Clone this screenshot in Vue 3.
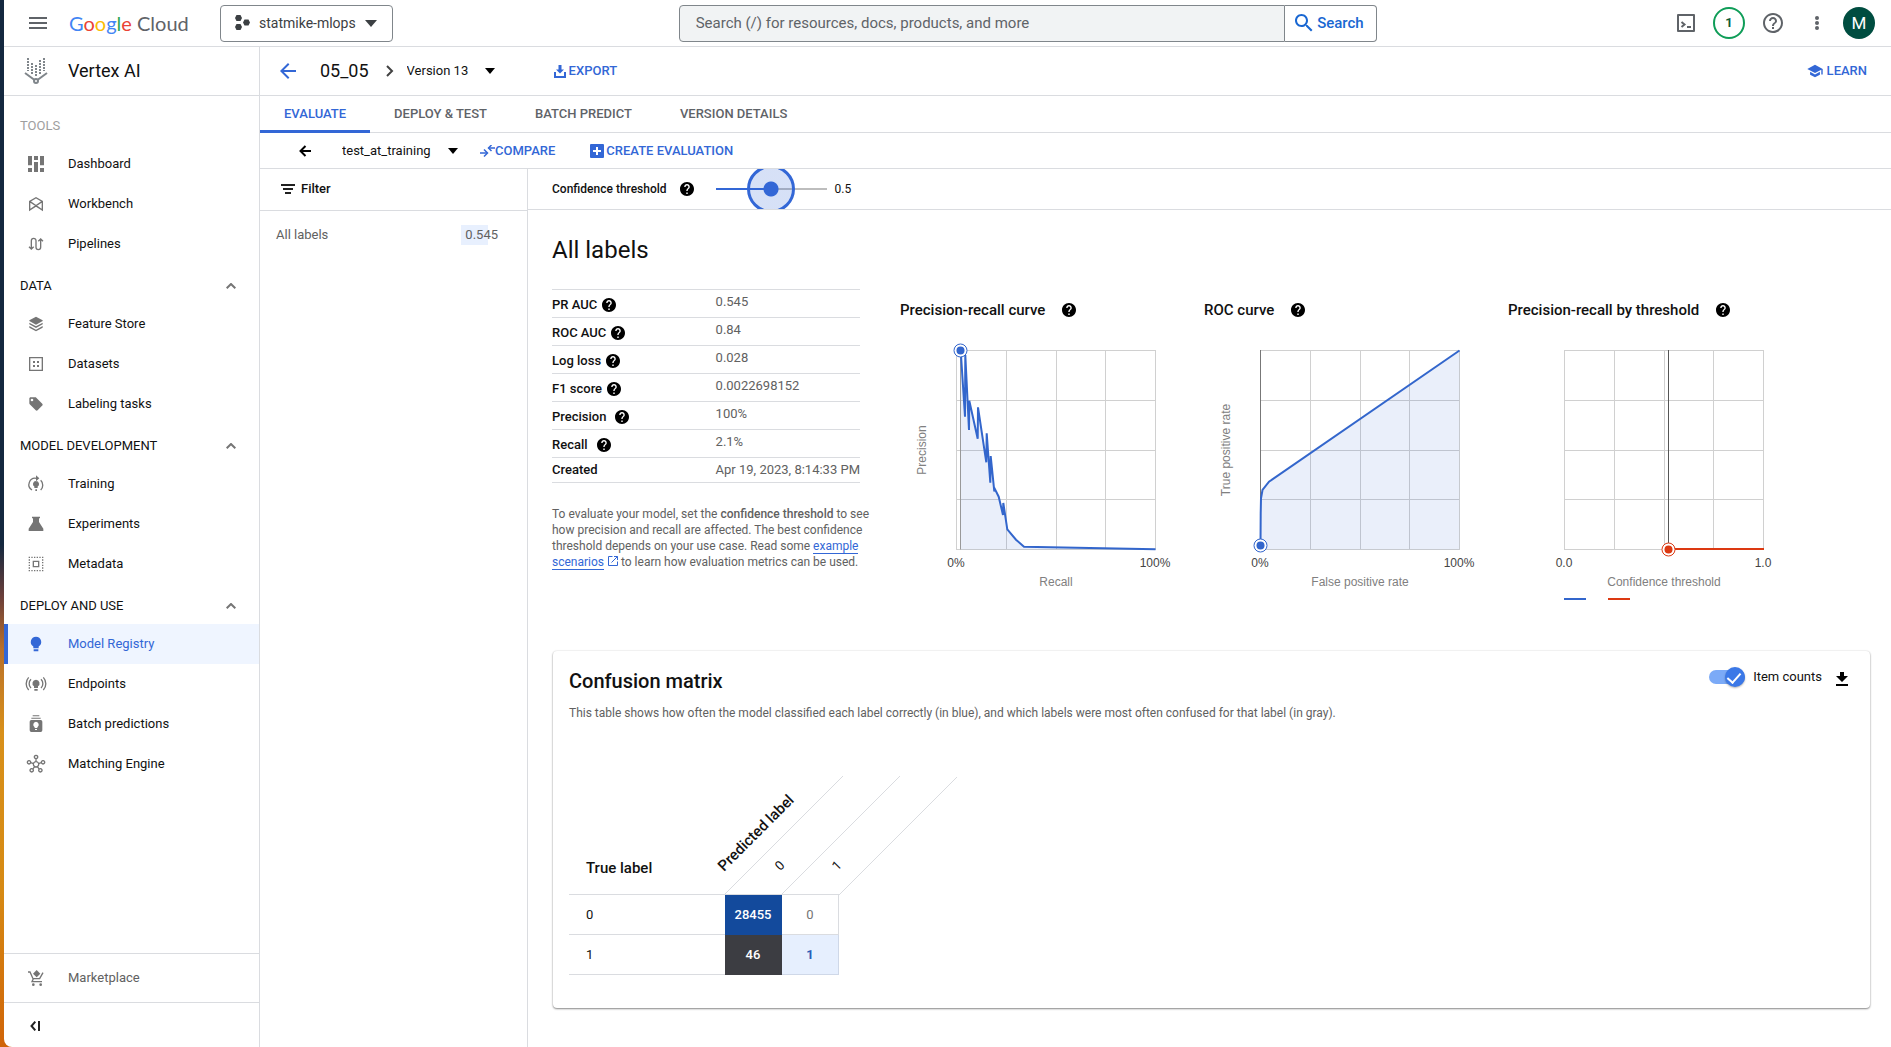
<script setup>
import { ref } from 'vue'

const search = ref('')
const version = ref('Version 13')
const evaluation = ref('test_at_training')
const threshold = ref(0.5)
const itemCounts = ref(true)

const HELP = 'M12 2C6.48 2 2 6.48 2 12s4.48 10 10 10 10-4.48 10-10S17.52 2 12 2zm1 17h-2v-2h2v2zm2.07-7.75l-.9.92C13.45 12.9 13 13.5 13 15h-2v-.5c0-1.1.45-2.1 1.17-2.83l1.24-1.26c.37-.36.59-.86.59-1.41 0-1.1-.9-2-2-2s-2 .9-2 2H8c0-2.21 1.79-4 4-4s4 1.79 4 4c0 .88-.36 1.68-.93 2.25z'

const groups = [
  {
    title: 'TOOLS',
    muted: true,
    items: [
      { name: 'Dashboard', fill: 'M0 0h6v14H0zM0 18h6v6H0zM9 0h6v6H9zM9 9h6v15H9zM18 0h6v14h-6zM18 18h6v6h-6z' },
      { name: 'Workbench', line: 'M2.500 21V8L12 2.500 21.500 8v13L12 15zM2.500 8l19 13M21.500 8l-19 13' },
      { name: 'Pipelines', line: 'M5 19V7a3.500 3.500 0 0 1 7 0V17a3.500 3.500 0 0 0 7 0V5M1.500 16L5 19.500 8.500 16M15.500 8L19 4.500 22.500 8' },
    ],
  },
  {
    title: 'DATA',
    items: [
      { name: 'Feature Store', fill: 'M12 1l10 5.500v1L12 13 2 7.500v-1zM2 10l10 5.500L22 10v2.500L12 18 2 12.500zM2 15l10 5.500L22 15v2.500L12 23 2 17.500z' },
      { name: 'Datasets', line: 'M2.500 2.500h19v19h-19z', fill: 'M7.500 7.500h3v3h-3zM13.500 7.500h3v3h-3zM7.500 13.500h3v3h-3zM13.500 13.500h3v3h-3z' },
      { name: 'Labeling tasks', fill: 'M21.410 11.580l-9-9C12.050 2.220 11.550 2 11 2H4c-1.100 0-2 .9-2 2v7c0 .55.22 1.050.59 1.420l9 9c.36.36.86.58 1.410.58.55 0 1.050-.22 1.410-.59l7-7c.37-.36.59-.86.59-1.410 0-.55-.23-1.060-.59-1.420zM6 8a2 2 0 1 1 0-4 2 2 0 0 1 0 4z' },
    ],
  },
  {
    title: 'MODEL DEVELOPMENT',
    items: [
      { name: 'Training', fill: 'M12 7.500a4.500 4.500 0 0 0-2.500 8.300V18h5v-2.200A4.500 4.500 0 0 0 12 7.500zM11 20h2.500v2.500H11zM12-1l5 4.500L12 8z', line: 'M6 21A9.500 9.500 0 0 1 12.500 3.500M19 6.500a10 10 0 0 1 0 14.500' },
      { name: 'Experiments', fill: 'M6 1h12v2.500h-1.500V9L23 19v3.500H1V19L7.500 9V3.500H6z' },
      { name: 'Metadata', line: 'M8 8h8v8H8z', dash: 'M1 2h22M1 22h22M2 1v22M22 1v22' },
    ],
  },
  {
    title: 'DEPLOY AND USE',
    items: [
      { name: 'Model Registry', active: true, fill: 'M12 1a8 8 0 0 0-4 14.800V18.500h8v-2.700A8 8 0 0 0 12 1zM8.500 20h7v3h-7z' },
      { name: 'Endpoints', fill: 'M12 5.500a5.500 5.500 0 0 0-3 10V18h6v-2.500a5.500 5.500 0 0 0-3-10zM9.500 19.500h5V22h-5z', line: 'M4.500 5a9 9 0 0 0 0 13M19.500 5a9 9 0 0 1 0 13M1 2a14 14 0 0 0 0 19M23 2a14 14 0 0 1 0 19' },
      { name: 'Batch predictions', fill: 'M7-1h10v1.500H7zM5 2.500h14V4H5zM5 6h14a2.500 2.500 0 0 1 2.500 2.500v13A2.500 2.500 0 0 1 19 24H5a2.500 2.500 0 0 1-2.500-2.500v-13A2.500 2.500 0 0 1 5 6zM12 8.500a4.500 4.500 0 0 0-2 8.300V18h4v-1.200a4.500 4.500 0 0 0-2-8.300zM10.500 19.500v1.500h3v-1.500z' },
      { name: 'Matching Engine', line: 'M12 8.500a4 4 0 1 0 .1 0zM12-1a2.500 2.500 0 1 0 .1 0zM1.500 7a2.500 2.500 0 1 0 .1 0zM22.500 7a2.500 2.500 0 1 0 .1 0zM5.500 19a2.500 2.500 0 1 0 .1 0zM18.500 19a2.500 2.500 0 1 0 .1 0zM12 4v4.500M4 10l4.400 1.500M20 10l-4.400 1.500M7.500 19.500l2.500-4M16.500 19.500L14 15.500' },
    ],
  },
]

const tabs = ['EVALUATE', 'DEPLOY & TEST', 'BATCH PREDICT', 'VERSION DETAILS']

const metrics = [
  { name: 'PR AUC', value: '0.545', help: true },
  { name: 'ROC AUC', value: '0.84', help: true },
  { name: 'Log loss', value: '0.028', help: true },
  { name: 'F1 score', value: '0.0022698152', help: true },
  { name: 'Precision', value: '100%', help: true, wide: true },
  { name: 'Recall', value: '2.1%', help: true, wide: true },
  { name: 'Created', value: 'Apr 19, 2023, 8:14:33 PM' },
]

const charts = [
  {
    title: 'Precision-recall curve', x: 'Recall', y: 'Precision', from: '0%', to: '100%',
    points: '60.7,20.5 65,86.7 65.3,25 69,100 69.3,70.7 77.7,108.7 78,77.3 86.3,132.3 86.7,103.3 90.3,152.7 90.7,126 94.3,161.3 95,159.3 98.7,166.7 103,185 103.3,173 107.3,199.3 116,209.7 124,216.7 255.5,219.3',
    base: '60.7', color: '#3366cc', cursor: 60.5, cursorColor: '#999', dot: [60.5, 20.5],
  },
  {
    title: 'ROC curve', x: 'False positive rate', y: 'True positive rate', from: '0%', to: '100%',
    points: '56.5,215.3 56.7,183.3 57,168.3 58.5,160 65,151.7 255.5,20.5',
    base: '56.5', color: '#3366cc', cursor: 56.5, cursorColor: '#777', dot: [56.5, 215.5],
  },
  {
    title: 'Precision-recall by threshold', x: 'Confidence threshold', y: '', from: '0.0', to: '1.0',
    points: '160.5,219 256,219', base: '', color: '#dc3912', cursor: 160.5, cursorColor: '#555', dot: [160.5, 219.5], legend: true,
  },
]

const matrix = [
  { label: '0', cells: [{ n: 28455, tone: 'deep' }, { n: 0, tone: 'plain' }] },
  { label: '1', cells: [{ n: 46, tone: 'dark' }, { n: 1, tone: 'pale' }] },
]
</script>

<template>
  <div class="desktop">
    <div class="window">
      <header class="topbar">
        <button class="icon-btn menu" aria-label="Main menu">
          <svg width="18" height="12" viewBox="0 0 18 12"><path d="M0 1h18M0 6h18M0 11h18" stroke="#5f6368" stroke-width="2" /></svg>
        </button>
        <a class="logo" href="#" aria-label="Google Cloud"><span class="b">G</span><span class="r">o</span><span class="y">o</span><span class="b">g</span><span class="g">l</span><span class="r">e</span> Cloud</a>
        <button class="project">
          <svg width="15" height="16" viewBox="0 0 15 16" fill="#3c4043"><path d="M1.500 0h4L7 3 5.500 6h-4L0 3zM1.500 9h4L7 12l-1.500 3h-4L0 12zM9.500 4.500h4l1.500 3-1.500 3h-4L8 7.500z" /></svg>
          <span>statmike-mlops</span>
          <svg width="12" height="7" viewBox="0 0 12 7"><path d="M0 0h12L6 7z" fill="#3c4043" /></svg>
        </button>
        <form class="search" @submit.prevent>
          <input v-model="search" type="text" aria-label="Search" placeholder="Search (/) for resources, docs, products, and more">
          <button type="submit">
            <svg width="18" height="18" viewBox="3 3 18 18"><path fill="#1967d2" d="M15.500 14h-.79l-.28-.27C15.410 12.590 16 11.110 16 9.500 16 5.910 13.090 3 9.500 3S3 5.910 3 9.500 5.910 16 9.500 16c1.610 0 3.090-.59 4.230-1.570l.27.28v.79l5 4.990L20.490 19l-4.990-5zm-6 0C7.010 14 5 11.990 5 9.500S7.010 5 9.500 5 14 7.010 14 9.500 11.990 14 9.500 14z" /></svg>
            Search
          </button>
        </form>
        <div class="tools">
          <button class="icon-btn" aria-label="Cloud Shell">
            <svg width="18" height="18" viewBox="0 0 18 18" fill="none" stroke="#5f6368" stroke-width="2"><path d="M1 1h16v16H1z" stroke-linejoin="round" /><path d="M4.500 8l3 2.500-3 2.500M10 13h4" /></svg>
          </button>
          <button class="count" aria-label="Notifications">1</button>
          <button class="icon-btn" aria-label="Help">
            <svg width="20" height="20" viewBox="2 2 20 20"><path fill="#5f6368" d="M11 18h2v-2h-2v2zm1-16C6.480 2 2 6.480 2 12s4.480 10 10 10 10-4.480 10-10S17.520 2 12 2zm0 18c-4.410 0-8-3.590-8-8s3.590-8 8-8 8 3.590 8 8-3.590 8-8 8zm0-14c-2.210 0-4 1.790-4 4h2c0-1.100.9-2 2-2s2 .9 2 2c0 2-3 1.750-3 5h2c0-2.250 3-2.500 3-5 0-2.210-1.790-4-4-4z" /></svg>
          </button>
          <button class="icon-btn more" aria-label="More options">
            <svg width="4" height="14" viewBox="0 0 4 14" fill="#5f6368"><circle cx="2" cy="2" r="2" /><circle cx="2" cy="7" r="2" /><circle cx="2" cy="12" r="2" /></svg>
          </button>
          <button class="avatar" aria-label="Account">M</button>
        </div>
      </header>

      <div class="body">
        <nav class="sidebar">
          <a class="product" href="#">
            <svg width="24" height="28" viewBox="0 0 24 28" fill="none" stroke="#80868b" stroke-width="2">
              <path d="M4 1v13M8 6v11M16 6v11M20 1v13" stroke-dasharray="2 1" />
              <path d="M12 8v12M16 3v2" stroke-dasharray="2 1" />
              <path d="M1 16l11 8 11-8" /><circle cx="12" cy="24" r="2" fill="#fff" />
            </svg>
            <span>Vertex AI</span>
          </a>
          <div class="groups">
            <section v-for="g in groups" :key="g.title">
              <h2 v-if="g.muted" class="muted">{{ g.title }}</h2>
              <button v-else class="group">
                {{ g.title }}
                <svg width="10" height="6" viewBox="0 0 10 6"><path d="M0.700 5.300L5 1l4.300 4.300" fill="none" stroke="#757575" stroke-width="2" /></svg>
              </button>
              <a v-for="i in g.items" :key="i.name" href="#" class="item" :class="{ active: i.active }">
                <svg width="16" height="16" viewBox="0 0 24 24">
                  <path v-if="i.line" :d="i.line" fill="none" stroke="currentColor" stroke-width="2" />
                  <path v-if="i.dash" :d="i.dash" fill="none" stroke="currentColor" stroke-width="2" stroke-dasharray="2 2" />
                  <path v-if="i.fill" :d="i.fill" fill="currentColor" fill-rule="evenodd" />
                </svg>
                <span>{{ i.name }}</span>
              </a>
            </section>
          </div>
          <a class="market" href="#">
            <svg width="16" height="16" viewBox="0 0 24 24">
              <path d="M0 3h3l4.500 10h10L22.500 4M8 13l-2 4.500h15" fill="none" stroke="#757575" stroke-width="2" />
              <path d="M13 0l5.500 5.500L13 11 7.500 5.500z" fill="#757575" /><circle cx="8" cy="22" r="2" fill="#757575" /><circle cx="19" cy="22" r="2" fill="#757575" />
            </svg>
            <span>Marketplace</span>
          </a>
          <button class="collapse" aria-label="Collapse menu">
            <svg width="10" height="10" viewBox="0 0 10 10"><path d="M5.300.7L1.500 5l3.800 4.300M9 0v10" fill="none" stroke="#212121" stroke-width="2" /></svg>
          </button>
        </nav>

        <main class="main">
          <div class="titlebar">
            <button class="icon-btn back" aria-label="Back">
              <svg width="16" height="16" viewBox="4 4 16 16"><path fill="#3367d6" d="M20 11H7.830l5.590-5.590L12 4l-8 8 8 8 1.410-1.410L7.830 13H20v-2z" /></svg>
            </button>
            <h1>05_05</h1>
            <svg class="crumb" width="8" height="12" viewBox="0 0 8 12"><path d="M1 1l5 5-5 5" fill="none" stroke="#424242" stroke-width="2" /></svg>
            <span class="dropdown ver">
              <select v-model="version" aria-label="Version"><option>Version 13</option></select>
              <svg width="10" height="6" viewBox="0 0 10 6"><path d="M0 0h10L5 6z" /></svg>
            </span>
            <button class="text-btn export">
              <svg width="12" height="13" viewBox="0 0 12 13" fill="#3367d6"><path d="M4.500 0h3v4.500H10L6 8.500 2 4.500h2.500zM0 7h2v4h8V7h2v6H0z" /></svg>EXPORT
            </button>
            <button class="text-btn learn">
              <svg width="16" height="14" viewBox="1 2 22 20"><path fill="#3367d6" d="M5 13.180v4L12 21l7-3.820v-4L12 17l-7-3.820zM12 3L1 9l11 6 9-4.910V17h2V9L12 3z" /></svg>LEARN
            </button>
          </div>

          <div class="tabs" role="tablist">
            <button v-for="(t, n) in tabs" :key="t" role="tab" :class="{ on: n === 0 }">{{ t }}</button>
          </div>

          <div class="toolbar">
            <button class="icon-btn" aria-label="Back to evaluations">
              <svg width="12" height="12" viewBox="0 0 12 12"><path d="M6.500 1l-5 5 5 5M1.500 6H12" fill="none" stroke="#000" stroke-width="2" /></svg>
            </button>
            <span class="dropdown eval">
              <select v-model="evaluation" aria-label="Evaluation"><option>test_at_training</option></select>
              <svg width="10" height="6" viewBox="0 0 10 6"><path d="M0 0h10L5 6z" /></svg>
            </span>
            <button class="text-btn compare">
              <svg width="15" height="12" viewBox="0 0 15 12"><path d="M0 8h7M15 3H8.500" stroke="#3367d6" stroke-width="1.500" /><path d="M4 4.500L7.500 8 4 11.500M11.500 0l-3 3 3 3" fill="none" stroke="#3367d6" stroke-width="1.500" /></svg>COMPARE
            </button>
            <button class="text-btn create">
              <svg width="14" height="14" viewBox="0 0 14 14"><rect width="14" height="14" rx="1" fill="#3367d6" /><path d="M7 3v8M3 7h8" stroke="#fff" stroke-width="2" /></svg>CREATE EVALUATION
            </button>
          </div>

          <div class="split">
            <aside class="labels">
              <button class="filter">
                <svg width="14" height="10" viewBox="0 0 14 10"><path d="M0 1h14M2 5h10M4 9h6" stroke="#212121" stroke-width="2" /></svg>Filter
              </button>
              <a class="label-row" href="#"><span>All labels</span><span class="score">0.545</span></a>
            </aside>

            <div class="content">
              <div class="threshold">
                <label for="threshold">Confidence threshold</label>
                <svg class="help" width="14" height="14" viewBox="2 2 20 20"><path :d="HELP" /></svg>
                <input id="threshold" v-model="threshold" type="range" min="0" max="1" step="0.01">
                <output for="threshold">{{ threshold }}</output>
              </div>

              <div class="report">
                <h2 class="heading">All labels</h2>
                <div class="overview">
                  <div class="summary">
                    <table class="metrics">
                      <tbody>
                        <tr v-for="m in metrics" :key="m.name">
                          <th scope="row"><span :class="{ wide: m.wide }">{{ m.name }}<svg v-if="m.help" width="14" height="14" viewBox="2 2 20 20"><path :d="HELP" /></svg></span></th>
                          <td>{{ m.value }}</td>
                        </tr>
                      </tbody>
                    </table>
                    <p class="hint">
                      To evaluate your model, set the <b>confidence threshold</b> to see how precision and recall are affected. The best confidence threshold depends on your use case. Read some <a href="#">example scenarios</a>
                      <svg width="10" height="10" viewBox="0 0 10 10"><path d="M4.500 .5h-4v9h9v-4M6 .5h3.500V4M9.500 .5L3.500 6.500" fill="none" stroke="#3367d6" /></svg>
                      to learn how evaluation metrics can be used.
                    </p>
                  </div>

                  <figure v-for="c in charts" :key="c.title" class="chart">
                    <figcaption>{{ c.title }}<svg width="14" height="14" viewBox="2 2 20 20"><path :d="HELP" /></svg></figcaption>
                    <svg width="304" height="274" viewBox="0 0 304 274">
                      <path d="M56 20.500h200M56 70.500h200M56 120.500h200M56 169.500h200M56 219.500h200M56.500 20v200M106.500 20v200M156.500 20v200M205.500 20v200M255.500 20v200" stroke="#d0d0d0" fill="none" />
                      <polygon v-if="c.base" :points="`${c.base},219.5 ${c.points} 255.5,219.5`" :fill="c.color" fill-opacity="0.1" />
                      <path :d="`M${c.cursor} 20V219.500`" :stroke="c.cursorColor" />
                      <polyline :points="c.points" fill="none" :stroke="c.color" stroke-width="2" />
                      <circle :cx="c.dot[0]" :cy="c.dot[1]" r="6.500" fill="#fff" :stroke="c.color" />
                      <circle :cx="c.dot[0]" :cy="c.dot[1]" r="4" :fill="c.color" />
                      <text class="tick" x="56" y="237">{{ c.from }}</text>
                      <text class="tick" x="255" y="237">{{ c.to }}</text>
                      <text class="axis" x="156" y="256">{{ c.x }}</text>
                      <text class="axis" transform="translate(26 120) rotate(-90)">{{ c.y }}</text>
                      <g v-if="c.legend" stroke-width="2"><path d="M56 269h22" stroke="#3366cc" /><path d="M100 269h22" stroke="#dc3912" /></g>
                    </svg>
                  </figure>
                </div>

                <section class="card">
                  <div class="card-head">
                    <h3>Confusion matrix</h3>
                    <label class="toggle"><input v-model="itemCounts" type="checkbox">Item counts</label>
                    <button class="icon-btn download" aria-label="Download">
                      <svg width="12" height="14" viewBox="0 0 12 14"><path d="M4 0h4v4h4l-6 6-6-6h4zM0 12h12v2H0z" /></svg>
                    </button>
                  </div>
                  <p>This table shows how often the model classified each label correctly (in blue), and which labels were most often confused for that label (in gray).</p>
                  <table class="matrix">
                    <thead>
                      <tr>
                        <th scope="col" class="corner">True label<span class="slant predicted">Predicted label</span></th>
                        <th v-for="r in matrix" :key="r.label" scope="col">
                          <svg class="rule" width="118" height="118" viewBox="0 0 118 118"><path d="M0 118L118 0" /></svg>
                          <span class="slant">{{ r.label }}</span>
                        </th>
                        <td class="edge"><svg class="rule" width="118" height="118" viewBox="0 0 118 118"><path d="M0 118L118 0" /></svg></td>
                      </tr>
                    </thead>
                    <tbody>
                      <tr v-for="r in matrix" :key="r.label">
                        <th scope="row">{{ r.label }}</th>
                        <td v-for="(c, n) in r.cells" :key="n" :class="c.tone">{{ c.n }}</td>
                      </tr>
                    </tbody>
                  </table>
                </section>
              </div>
            </div>
          </div>
        </main>
      </div>
    </div>
  </div>
</template>

<style>
body { margin: 0; }
</style>

<style scoped>
* { box-sizing: border-box; }
.desktop {
  display: flex;
  min-height: 100vh;
  padding-left: 4px;
  background: linear-gradient(#14283f 0%, #14283f 52%, #6b3f3a 57%, #b9702a 62%, #d8901a 70%, #d68a14 85%, #d06408 100%);
  font: 13px/20px Roboto, "Liberation Sans", sans-serif;
  color: #111;
}
.window {
  flex: 1;
  min-width: 0;
  display: flex;
  flex-direction: column;
  background: #fff;
  border-bottom-left-radius: 8px;
}
button, input, select { font: inherit; color: inherit; border: 0; padding: 0; margin: 0; background: none; }
button { cursor: pointer; }
a { text-decoration: none; color: inherit; }
h1, h2, h3, p, figure { margin: 0; }
svg { flex: none; display: block; }
.icon-btn { display: flex; align-items: center; justify-content: center; }

.topbar { display: flex; align-items: center; height: 47px; border-bottom: 1px solid #dadce0; padding: 0 16px 0 25px; }
.logo { margin-left: 22px; width: 151px; font: 20px/24px Lato, "Open Sans", sans-serif; color: #5f6368; white-space: nowrap; }
.logo .b { color: #4285f4; }
.logo .r { color: #ea4335; }
.logo .y { color: #fbbc04; }
.logo .g { color: #34a853; }
.project {
  display: flex; align-items: center; gap: 9px; height: 37px; padding: 0 15px 0 14px;
  border: 1px solid #80868b; border-radius: 4px; font-size: 14px; color: #3c4043; white-space: nowrap;
}
.search { display: flex; flex: 0 1 698px; height: 37px; margin: 0 auto 0 286px; }
.search input {
  flex: 1; min-width: 0; padding: 0 16px; font-size: 15px; background: #f1f3f4;
  border: 1px solid #80868b; border-radius: 4px 0 0 4px;
}
.search input::placeholder { color: #5f6368; opacity: 1; }
.search button {
  display: flex; align-items: center; gap: 4px; padding: 0 12px 0 10px; font-size: 15px; font-weight: 500; color: #1967d2;
  border: 1px solid #80868b; border-left: 0; border-radius: 0 4px 4px 0;
}
.tools { display: flex; align-items: center; gap: 18px; }
.count { width: 32px; height: 32px; border: 2px solid #0f9d58; border-radius: 50%; color: #0b5d36; font-weight: 700; }
.more { width: 24px; margin: 0 -4px 0 4px; }
.avatar { width: 32px; height: 32px; border-radius: 50%; background: #004d40; color: #fff; font-size: 17px; }

.body { flex: 1; display: flex; }
.sidebar { flex: none; width: 256px; display: flex; flex-direction: column; border-right: 1px solid #dadce0; }
.product { display: flex; align-items: center; gap: 20px; height: 49px; padding-left: 20px; border-bottom: 1px solid #dadce0; font-size: 18px; }
.groups { flex: 1; }
.muted { height: 48px; padding: 20px 16px 0; font-size: 13px; font-weight: 400; line-height: 20px; color: #9e9e9e; }
.group { display: flex; align-items: center; justify-content: space-between; width: 100%; height: 40px; padding: 4px 23px 0 16px; }
.item { display: flex; align-items: center; gap: 24px; height: 40px; padding-left: 24px; }
.item svg { color: #757575; overflow: visible; }
.item.active { padding-left: 20px; border-left: 4px solid #3367d6; background: #eff5ff; color: #3367d6; }
.item.active svg { color: #3367d6; }
.market { display: flex; align-items: center; gap: 24px; height: 49px; padding-left: 24px; border-top: 1px solid #dadce0; color: #616161; }
.collapse { height: 45px; padding: 2px 0 0 26px; border-top: 1px solid #dadce0; }

.main { flex: 1; min-width: 0; display: flex; flex-direction: column; }
.titlebar { display: flex; align-items: center; height: 49px; padding: 0 24px 0 20px; border-bottom: 1px solid #dadce0; }
h1 { margin-left: 24px; font-size: 18px; font-weight: 400; }
.crumb { margin: 0 13px 0 17px; }
.dropdown { position: relative; display: flex; align-items: center; }
.dropdown select { appearance: none; cursor: pointer; }
.dropdown svg { position: absolute; right: 0; pointer-events: none; }
.ver select { width: 88px; }
.eval select { width: 116px; }
.text-btn { display: flex; align-items: center; gap: 2px; font-weight: 500; color: #3367d6; white-space: nowrap; }
.export { margin-left: 59px; gap: 3px; }
.learn { margin-left: auto; gap: 4px; }
.tabs { display: flex; height: 37px; border-bottom: 1px solid #dadce0; }
.tabs button { height: 37px; padding: 2px 24px 0; border-bottom: 3px solid transparent; font-weight: 500; color: #5f6368; white-space: nowrap; }
.tabs .on { color: #3367d6; border-bottom-color: #3367d6; }
.toolbar { display: flex; align-items: center; height: 36px; padding-left: 39px; border-bottom: 1px solid #dadce0; }
.eval { margin-left: 31px; }
.compare { margin-left: 22px; gap: 0; }
.create { margin-left: 35px; }

.split { flex: 1; display: flex; }
.labels { flex: none; width: 268px; border-right: 1px solid #dadce0; }
.filter { display: flex; align-items: center; gap: 6px; width: 100%; height: 42px; padding: 0 0 2px 21px; border-bottom: 1px solid #dadce0; font-weight: 500; }
.label-row { display: flex; justify-content: space-between; padding: 14px 29px 0 16px; color: #616161; }
.score { padding-left: 4px; background: linear-gradient(#e8f0fe, #e8f0fe) no-repeat 0 0 / 27px 20px; }
.content { flex: 1; min-width: 0; }
.threshold { display: flex; align-items: center; height: 41px; padding-left: 24px; border-bottom: 1px solid #dadce0; overflow: hidden; font-size: 12px; }
.threshold label { font-weight: 500; }
.help { margin: 0 22px 0 13px; }
.threshold input {
  appearance: none; width: 111px; height: 48px; cursor: pointer;
  background:
    linear-gradient(#3367d6, #3367d6) no-repeat 0 50% / 50% 2px,
    linear-gradient(#bdbdbd, #bdbdbd) no-repeat 0 50% / 100% 2px;
}
.threshold input::-webkit-slider-thumb {
  appearance: none; width: 48px; height: 48px; border: 3px solid #3367d6; border-radius: 50%;
  background: radial-gradient(circle, #3367d6 7px, rgba(51, 103, 214, .2) 8px);
}
.threshold output { margin-left: 8px; }

.report { padding: 24px 21px 38px 24px; }
.heading { font-size: 24px; font-weight: 400; line-height: 32px; }
.overview { display: flex; margin-top: 23px; }
.summary { flex: none; width: 324px; margin-right: 24px; }
.metrics { width: 308px; border-collapse: collapse; border-top: 1px solid #dadce0; }
.metrics tr { height: 28px; border-bottom: 1px solid #dadce0; }
.metrics tr:last-child { height: 24px; }
.metrics th, .metrics td { padding: 0; vertical-align: top; text-align: left; line-height: 24px; white-space: nowrap; }
.metrics th { width: 164px; font-weight: 500; }
.metrics td { color: #616161; }
.metrics span { display: flex; align-items: center; gap: 5px; }
.metrics tr:not(:last-child) span { padding-top: 3px; }
.metrics .wide { gap: 9px; }
.hint { margin-top: 23px; font-size: 12px; line-height: 16px; color: #616161; }
.hint b { font-weight: 500; }
.hint a { color: #3367d6; border-bottom: 1px solid #3367d6; }
.hint svg { display: inline-block; margin-left: 4px; }
.chart { flex: none; width: 304px; }
.chart figcaption { display: flex; align-items: center; gap: 17px; height: 20px; margin: 11px 0 10px; font-size: 15px; font-weight: 500; }
.chart text { text-anchor: middle; font: 12px "Liberation Sans", Arial, sans-serif; }
.tick { fill: #444; }
.axis { fill: #808080; }

.card { margin: 47px 0 0 1px; min-height: 357px; padding: 16px; border-radius: 4px; box-shadow: 0 1px 2px rgba(0, 0, 0, .45), 0 0 2px rgba(0, 0, 0, .12); }
.card-head { display: flex; align-items: flex-start; height: 28px; padding-right: 6px; }
h3 { flex: 1; font-size: 20px; font-weight: 500; line-height: 28px; }
.toggle { display: flex; align-items: center; gap: 8px; margin-right: 14px; cursor: pointer; }
.download { height: 24px; }
.toggle input { appearance: none; position: relative; width: 36px; height: 14px; border-radius: 7px; background: #7baaf7; cursor: pointer; }
.toggle input::before { content: ""; position: absolute; right: 0; top: -3px; width: 20px; height: 20px; border-radius: 50%; background: #3b78e7; box-shadow: 0 1px 2px rgba(0, 0, 0, .3); }
.toggle input::after { content: ""; position: absolute; right: 7px; top: 0; width: 6px; height: 11px; border: solid #fff; border-width: 0 2px 2px 0; transform: rotate(42deg); }
.card p { margin-top: 8px; font-size: 12px; color: #616161; }

.matrix { margin-top: 53px; border-collapse: separate; border-spacing: 0; table-layout: fixed; width: 270px; font-size: 13px; }
.matrix th { padding: 0; text-align: left; font-weight: 400; }
.matrix thead th, .edge { position: relative; width: 57px; height: 119px; padding: 0; border-bottom: 1px solid #dadce0; }
.matrix thead .corner { width: 156px; padding: 67px 0 0 17px; font-size: 15px; font-weight: 500; vertical-align: top; line-height: 51px; }
.matrix thead .edge { width: 0; border: 0; }
.rule { position: absolute; left: 0; bottom: 0; stroke: #dadce0; fill: none; overflow: visible; }
.slant { position: absolute; left: 58px; bottom: 20px; line-height: 16px; white-space: nowrap; transform: rotate(-45deg); transform-origin: 0 100%; }
.predicted { left: 157px; bottom: 20px; }
.matrix tbody th { height: 40px; padding-left: 17px; border-bottom: 1px solid #dadce0; }
.matrix tbody td { padding: 0; text-align: center; font-weight: 500; border-right: 1px solid #dadce0; border-bottom: 1px solid #dadce0; }
.matrix .deep { background: #134a9c; border-color: #134a9c; color: #fff; }
.matrix .dark { background: #3c3d42; border-color: #3c3d42; color: #fff; }
.matrix .plain { color: #757575; font-weight: 400; }
.matrix .pale { background: #e6effe; border-color: #cfd8e8; color: #2a5db8; font-weight: 700; }
</style>
